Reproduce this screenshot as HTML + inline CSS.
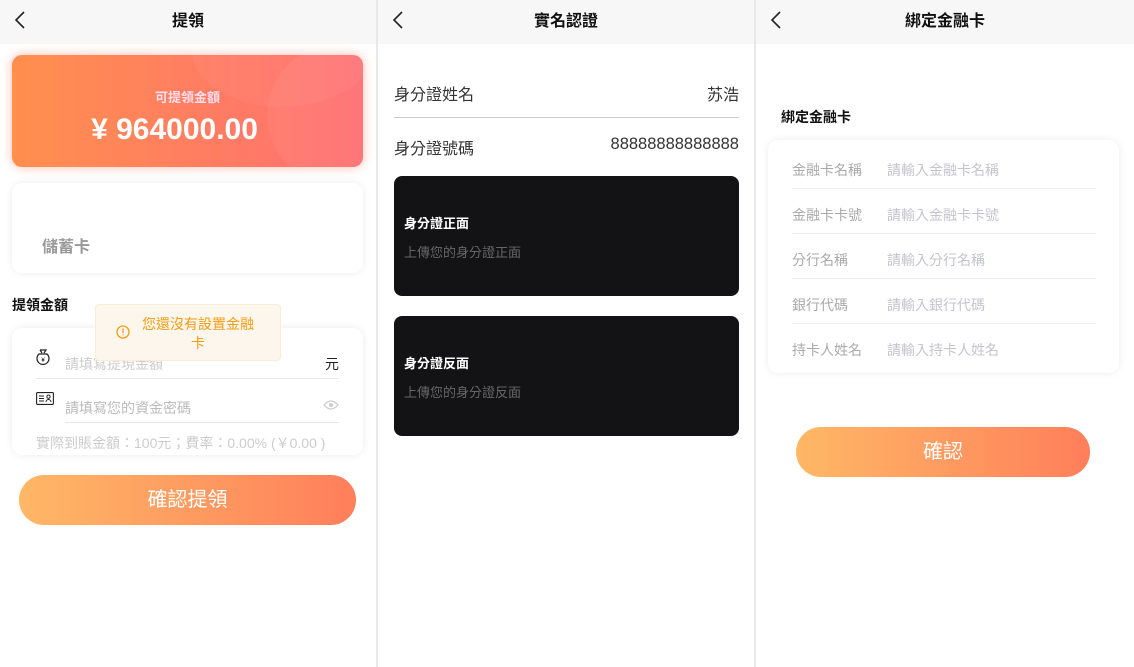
<!DOCTYPE html>
<html><head><meta charset="utf-8"><style>
*{margin:0;padding:0;box-sizing:border-box}
body{width:1134px;height:667px;background:#e8e8e8;font-family:"Liberation Sans","Noto Sans CJK TC",sans-serif;position:relative;overflow:hidden}
.p{position:absolute;top:0;height:667px;background:#fff}
.hd{position:absolute;left:0;right:0;top:0;height:44px;background:#f7f7f7;text-align:center;line-height:44px;font-size:16px;font-weight:bold;color:#111}
.bk{position:absolute;left:14px;top:11px}
.a{position:absolute}
</style></head><body>
<!-- panel 1 -->
<div class="p" style="left:0;width:376px">
<div class="hd">提領<svg class="bk" width="12" height="18" viewBox="0 0 12 18"><path d="M10 1L2 9l8 8" fill="none" stroke="#222" stroke-width="1.6"/></svg></div>
<div class="a" style="left:12px;top:55px;width:351px;height:112px;border-radius:10px;background:linear-gradient(90deg,#ff8f4d,#ff6f73);box-shadow:0 0 10px rgba(255,120,90,.5);overflow:hidden">
<div class="a" style="left:255px;top:-10px;width:140px;height:140px;border-radius:50%;background:rgba(255,255,255,.05)"></div>
<div class="a" style="left:180px;top:-60px;width:180px;height:112px;border-radius:50%;background:rgba(255,255,255,.04)"></div>
<div class="a" style="left:0;right:0;top:32px;text-align:center;color:#fde;font-size:13px;font-weight:bold">可提領金額</div>
<div class="a" style="left:0;right:0;top:58px;text-align:center;color:#fff;font-size:30px;font-weight:bold;padding-right:26px">¥ 964000.00</div></div>
<div class="a" style="left:12px;top:183px;width:351px;height:90px;border-radius:10px;background:#fff;box-shadow:0 0 8px rgba(0,0,0,.08)">
<div class="a" style="left:30px;top:50px;font-size:16px;font-weight:bold;color:#999">儲蓄卡</div></div>
<div class="a" style="left:12px;top:295px;font-size:14px;font-weight:bold;color:#111">提領金額</div>
<div class="a" style="left:12px;top:328px;width:351px;height:127px;border-radius:10px;background:#fff;box-shadow:0 0 8px rgba(0,0,0,.08);overflow:hidden">
<svg class="a" style="left:24px;top:21px" width="14" height="16" viewBox="0 0 14 16"><path d="M4 1h6l-2 3M4 1l2 3M3 5a6 6 0 1 0 8 0z" fill="none" stroke="#222" stroke-width="1.2"/><text x="7" y="13" font-size="6" text-anchor="middle">¥</text></svg>
<div class="a" style="left:53px;top:26px;font-size:14px;color:#ccc">請填寫提現金額</div>
<div class="a" style="left:313px;top:26px;font-size:14px;color:#222">元</div>
<div class="a" style="left:24px;top:50px;width:303px;height:1px;background:#e8e8e8"></div>
<svg class="a" style="left:24px;top:64px" width="18" height="13" viewBox="0 0 18 13"><rect x=".6" y=".6" width="16.8" height="11.8" rx="1" fill="none" stroke="#222" stroke-width="1.1"/><path d="M3 4h5M3 6.5h5M3 9h5M10 10a2.5 2.5 0 0 1 5 0M12.5 3a1.7 1.7 0 1 0 .01 0" fill="none" stroke="#222" stroke-width="1"/></svg>
<div class="a" style="left:53px;top:70px;font-size:14px;color:#bbb">請填寫您的資金密碼</div>
<svg class="a" style="left:311px;top:71px" width="16" height="12" viewBox="0 0 16 12"><path d="M1 6Q8-2 15 6Q8 14 1 6z" fill="none" stroke="#ccc" stroke-width="1.3"/><circle cx="8" cy="6" r="2" fill="#ccc"/></svg>
<div class="a" style="left:53px;top:94px;width:274px;height:1px;background:#e8e8e8"></div>
<div class="a" style="left:24px;top:105px;font-size:14px;color:#ccc;white-space:nowrap">實際到賬金額：100元；費率：0.00% (￥0.00 )</div></div>
<div class="a" style="left:95px;top:304px;width:186px;height:57px;background:#fdf6ec;border:1px solid #faecd8;border-radius:4px">
<svg class="a" style="left:20px;top:20px" width="14" height="14" viewBox="0 0 14 14"><circle cx="7" cy="7" r="6" fill="none" stroke="#f39c12" stroke-width="1.3"/><path d="M7 3.5v4.5M7 9.5v1" stroke="#f39c12" stroke-width="1.3"/></svg>
<div class="a" style="left:40px;top:10px;width:124px;text-align:center;font-size:14px;line-height:19px;color:#f39c12">您還沒有設置金融卡</div></div>
<div class="a" style="left:19px;top:475px;width:337px;height:50px;border-radius:25px;background:linear-gradient(90deg,#feb866,#ff7f5b);color:#fff;font-size:20px;text-align:center;line-height:50px">確認提領</div>
</div>
<!-- panel 2 -->
<div class="p" style="left:378px;width:376px">
<div class="hd">實名認證<svg class="bk" width="12" height="18" viewBox="0 0 12 18"><path d="M10 1L2 9l8 8" fill="none" stroke="#222" stroke-width="1.6"/></svg></div>
<div class="a" style="left:16px;top:81px;font-size:16px;color:#333">身分證姓名</div>
<div class="a" style="right:15px;top:81px;font-size:16px;color:#333">苏浩</div>
<div class="a" style="left:16px;top:117px;width:345px;height:1px;background:#ccc"></div>
<div class="a" style="left:16px;top:135px;font-size:16px;color:#333">身分證號碼</div>
<div class="a" style="right:15px;top:135px;font-size:16.5px;color:#333">88888888888888</div>
<div class="a" style="left:16px;top:176px;width:345px;height:120px;background:#131315;border-radius:8px">
<div class="a" style="left:10px;top:37px;color:#fff;font-size:13px;font-weight:bold">身分證正面</div>
<div class="a" style="left:10px;top:66px;color:#666;font-size:13px">上傳您的身分證正面</div></div>
<div class="a" style="left:16px;top:316px;width:345px;height:120px;background:#131315;border-radius:8px">
<div class="a" style="left:10px;top:37px;color:#fff;font-size:13px;font-weight:bold">身分證反面</div>
<div class="a" style="left:10px;top:66px;color:#666;font-size:13px">上傳您的身分證反面</div></div>
</div>
<!-- panel 3 -->
<div class="p" style="left:756px;width:378px">
<div class="hd">綁定金融卡<svg class="bk" width="12" height="18" viewBox="0 0 12 18"><path d="M10 1L2 9l8 8" fill="none" stroke="#222" stroke-width="1.6"/></svg></div>
<div class="a" style="left:25px;top:107px;font-size:14px;font-weight:bold;color:#111">綁定金融卡</div>
<div class="a" style="left:12px;top:140px;width:351px;height:233px;border-radius:10px;background:#fff;box-shadow:0 0 8px rgba(0,0,0,.08)">
<div class="a" style="left:24px;top:20px;font-size:14px;line-height:20px;color:#aaa">金融卡名稱</div><div class="a" style="left:119px;top:20px;font-size:14px;line-height:20px;color:#c4c4cc">請輸入金融卡名稱</div><div class="a" style="left:24px;top:48px;width:304px;height:1px;background:#eee"></div>
<div class="a" style="left:24px;top:65px;font-size:14px;line-height:20px;color:#aaa">金融卡卡號</div><div class="a" style="left:119px;top:65px;font-size:14px;line-height:20px;color:#c4c4cc">請輸入金融卡卡號</div><div class="a" style="left:24px;top:93px;width:304px;height:1px;background:#eee"></div>
<div class="a" style="left:24px;top:110px;font-size:14px;line-height:20px;color:#aaa">分行名稱</div><div class="a" style="left:119px;top:110px;font-size:14px;line-height:20px;color:#c4c4cc">請輸入分行名稱</div><div class="a" style="left:24px;top:138px;width:304px;height:1px;background:#eee"></div>
<div class="a" style="left:24px;top:155px;font-size:14px;line-height:20px;color:#aaa">銀行代碼</div><div class="a" style="left:119px;top:155px;font-size:14px;line-height:20px;color:#c4c4cc">請輸入銀行代碼</div><div class="a" style="left:24px;top:183px;width:304px;height:1px;background:#eee"></div>
<div class="a" style="left:24px;top:200px;font-size:14px;line-height:20px;color:#aaa">持卡人姓名</div><div class="a" style="left:119px;top:200px;font-size:14px;line-height:20px;color:#c4c4cc">請輸入持卡人姓名</div>
</div>
<div class="a" style="left:40px;top:427px;width:294px;height:50px;border-radius:25px;background:linear-gradient(90deg,#feb866,#ff7f5b);color:#fff;font-size:20px;text-align:center;line-height:50px">確認</div>
</div>
</body></html>
